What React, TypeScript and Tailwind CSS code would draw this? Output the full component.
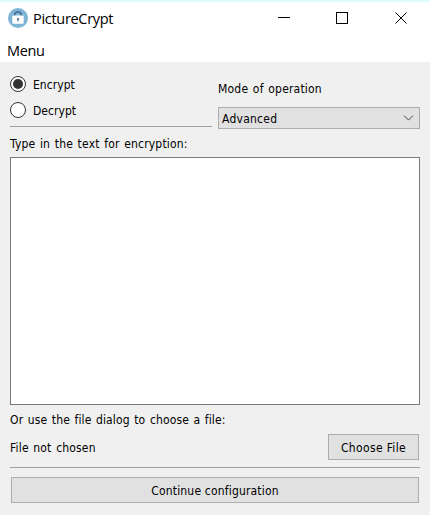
import React from "react";

function LockLogo() {
  return (
    <svg className="h-5 w-5 shrink-0" viewBox="0 0 20 20">
      <circle cx="10" cy="10" r="10" fill="#7cb5d6" />
      <path d="M6.6 8V7.2a3.4 3.1 0 0 1 6.8 0V8" fill="none" stroke="#46678c" strokeWidth="1.5" />
      <rect x="4.3" y="7.5" width="11.4" height="8.2" rx="1" fill="#fff" />
      <circle cx="10" cy="11" r="1.1" fill="#46678c" />
      <path d="M9.5 11h1v2.5h-1z" fill="#46678c" />
    </svg>
  );
}

function Radio({ label, checked = false }: { label: string; checked?: boolean }) {
  return (
    <div className="flex h-[26px] items-center">
      <span className="flex h-4 w-4 items-center justify-center rounded-full border border-[#333] bg-white">
        {checked && <span className="h-2.5 w-2.5 rounded-full bg-[#333]" />}
      </span>
      <span className="ml-[7px] pt-px tracking-[0.05px]">{label}</span>
    </div>
  );
}

export default function App() {
  return (
    <div className="flex h-[515px] w-[430px] flex-col overflow-hidden whitespace-nowrap border-t-2 border-[#e0fdfd] bg-[#f0f0f0] font-['DejaVu_Sans_Condensed','DejaVu_Sans',sans-serif] text-[12px] leading-4 tracking-[0.18px] text-black [font-stretch:condensed] [font-variant-ligatures:none] [word-spacing:1px]">
      <header className="flex h-[60px] shrink-0 flex-col bg-white font-['Open_Sans',sans-serif] [font-stretch:normal]">
        <div className="flex h-8 items-center pl-2">
          <LockLogo />
          <span className="ml-[5px] pt-px text-[14.5px] tracking-[-0.3px]">PictureCrypt</span>
          <svg className="ml-auto mr-[22px] h-3 w-[130px]" viewBox="0 0 130 12" fill="none" stroke="#000" shapeRendering="crispEdges">
            <path d="M0 5.5h12M58.5.5h11v11h-11z" />
            <path d="m117.5.5 11 11m0-11-11 11" shapeRendering="auto" />
          </svg>
        </div>
        <div className="flex h-[28px] items-center pl-[7px] pt-[5px] text-[14.5px] tracking-[-0.4px]">
          <span>Menu</span>
        </div>
      </header>
      <main className="flex flex-1 flex-col px-2.5">
        <div className="flex h-[67px] gap-1.5">
          <div className="w-[202px] pt-[9px]">
            <Radio label="Encrypt" checked />
            <Radio label="Decrypt" />
            <div className="mt-[3px] h-px bg-[#a0a0a0]" />
          </div>
          <div className="flex w-[202px] flex-col pt-[19px]">
            <span className="tracking-[0.2px]">Mode of operation</span>
            <div className="mt-[10px] flex h-[22px] shrink-0 items-center border border-[#adadad] bg-[#e1e1e1] pl-[3px]">
              <span className="pt-px tracking-[0.25px]">Advanced</span>
              <svg className="ml-auto mr-[5px] h-[6px] w-[11px]" viewBox="0 0 11 6" fill="none" stroke="#444">
                <path d="m1 .6 4.5 4.5L10 .6" />
              </svg>
            </div>
          </div>
        </div>
        <span className="mt-[7px]">Type in the text for encryption:</span>
        <textarea className="mt-[5px] block h-[248px] w-full shrink-0 resize-none border border-[#7a7a7a] bg-white outline-none" />
        <span className="mt-[7px] tracking-[0.13px]">Or use the file dialog to choose a file:</span>
        <div className="mt-[6px] flex h-[26px] items-center justify-between pr-px">
          <span className="pt-px">File not chosen</span>
          <button className="h-[26px] w-[91px] border border-[#adadad] bg-[#e1e1e1] pt-px tracking-[0.35px]">Choose File</button>
        </div>
        <div className="mt-[7px] h-px bg-[#a0a0a0]" />
        <button className="mx-px mt-[9px] h-[26px] border border-[#adadad] bg-[#e1e1e1] pt-px">Continue configuration</button>
      </main>
    </div>
  );
}
